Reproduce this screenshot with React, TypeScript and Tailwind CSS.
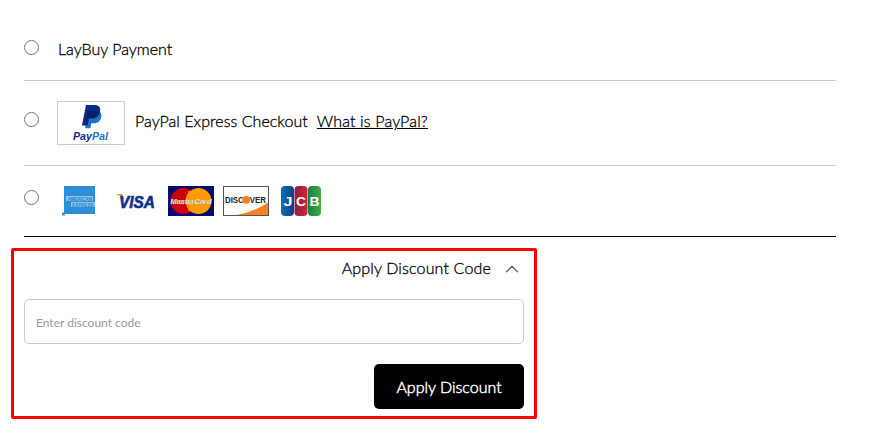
import { ChevronUp } from "lucide-react";

const PayPalLogo = () => (
  <svg width="66" height="42" viewBox="0 0 66 42">
    <path d="M29 9h9.500c3.700 0 5.500 2.200 4.800 5.800-.9 4.500-3.600 6.500-7.300 6.500h-2.700l-.9 5h-5.200z" fill="#1a73c9" />
    <path d="M28 3h8.500c4.200 0 6.300 2.200 5.600 6-.8 4.700-4 7.300-8.200 7.300h-3.200l-1.200 7.200h-5.600z" fill="#0a2d84" />
    <path d="M29.300 9h12.600c-.8 4.600-3.900 7.300-8 7.300h-3.200l-1.100 6.500-1.700.2z" fill="#0b1f66" />
    <text x="15" y="38" fontFamily="Liberation Sans, sans-serif" fontSize="11" fontWeight="700" fontStyle="italic" fill="#0a2d84" textLength="35" lengthAdjust="spacingAndGlyphs">
      Pay<tspan fill="#1a73c9">Pal</tspan>
    </text>
  </svg>
);

const AmexLogo = () => (
  <svg width="33" height="30" viewBox="0 0 33 30">
    <rect x="2" width="31" height="28" fill="#2a8fd8" />
    <rect x="0" y="26.500" width="3" height="3" fill="#3b97dc" />
    <rect x="4" y="10" width="27" height="5" fill="#8cc4ec" />
    <rect x="9" y="16" width="24" height="5" fill="#8cc4ec" />
    <text x="18" y="14.500" textAnchor="middle" fontFamily="Liberation Sans, sans-serif" fontSize="4.500" fontWeight="700" fill="#2a7fc8">AMERICAN</text>
    <text x="21" y="20.500" textAnchor="middle" fontFamily="Liberation Sans, sans-serif" fontSize="4.500" fontWeight="700" fill="#2a7fc8">EXPRESS</text>
  </svg>
);

const VisaLogo = () => (
  <svg width="41" height="16" viewBox="0 0 41 16">
    <path d="M0 1h7.500l2 6C7 4 4 2 0 1z" fill="#f0a63a" />
    <text x="4" y="14.500" fontFamily="Liberation Sans, sans-serif" fontSize="16" fontWeight="700" fontStyle="italic" fill="#14308a" stroke="#14308a" strokeWidth="0.600" textLength="36" lengthAdjust="spacingAndGlyphs">VISA</text>
  </svg>
);

const MasterCardLogo = () => (
  <svg width="46" height="30" viewBox="0 0 46 30">
    <rect width="46" height="30" fill="#000a70" />
    <circle cx="15.500" cy="15" r="13" fill="#cc0000" />
    <circle cx="30.500" cy="15" r="13" fill="#ff9a00" />
    <path d="M20 6h6M19 9h8M18.500 12h9M18.500 18h9M19 21h8M20 24h6" stroke="#ff9a00" strokeWidth="1.300" />
    <text x="2.500" y="18" fontFamily="Liberation Sans, sans-serif" fontSize="7.800" fontWeight="700" fontStyle="italic" fill="#fff" stroke="#999" strokeWidth="0.250" textLength="41" lengthAdjust="spacingAndGlyphs">MasterCard</text>
  </svg>
);

const DiscoverLogo = () => (
  <svg width="46" height="30" viewBox="0 0 46 30">
    <rect x="0.500" y="0.500" width="45" height="29" fill="#fff" stroke="#555" />
    <path d="M14 29C26 26.500 37 22 45 16.500V29z" fill="#f58220" />
    <text x="2" y="17" fontFamily="Liberation Sans, sans-serif" fontSize="8.400" fontWeight="700" fill="#222" textLength="41" lengthAdjust="spacingAndGlyphs">DISCOVER</text>
    <circle cx="23.300" cy="13.800" r="3.900" fill="#f58220" />
  </svg>
);

const JcbLogo = () => (
  <svg width="40" height="30" viewBox="0 0 40 30">
    <defs>
      <linearGradient id="jcb-blue" x1="0" x2="1">
        <stop offset="0" stopColor="#0f6fb5" />
        <stop offset="1" stopColor="#0b3f86" />
      </linearGradient>
      <linearGradient id="jcb-red" x1="0" x2="1">
        <stop offset="0" stopColor="#8f1d3c" />
        <stop offset="1" stopColor="#d3243a" />
      </linearGradient>
      <linearGradient id="jcb-green" x1="0" x2="1">
        <stop offset="0" stopColor="#15803f" />
        <stop offset="1" stopColor="#48ab47" />
      </linearGradient>
    </defs>
    <rect x="0" width="13" height="30" rx="4" fill="url(#jcb-blue)" />
    <rect x="13.500" width="13" height="30" rx="4" fill="url(#jcb-red)" />
    <rect x="27" width="13" height="30" rx="4" fill="url(#jcb-green)" />
    <text x="2.500" y="20" fontFamily="Liberation Sans, sans-serif" fontSize="13" fontWeight="700" fill="#fff" textLength="9" lengthAdjust="spacingAndGlyphs">J</text>
    <text x="15" y="20" fontFamily="Liberation Sans, sans-serif" fontSize="13" fontWeight="700" fill="#fff" textLength="10" lengthAdjust="spacingAndGlyphs">C</text>
    <text x="28.500" y="20" fontFamily="Liberation Sans, sans-serif" fontSize="13" fontWeight="700" fill="#fff" textLength="10" lengthAdjust="spacingAndGlyphs">B</text>
  </svg>
);

const App = () => {
  return (
    <div className="h-[426px] w-[871px] overflow-hidden bg-white text-black font-['Lato',sans-serif] text-base font-light [-webkit-text-stroke:0.3px_currentColor]">
      <div className="w-[836px] pl-6">
        <div className="flex h-[81px] border-b border-[#ccc] pt-10">
          <input type="radio" name="payment" className="m-0 h-[15px] w-[15px]" />
          <span className="ml-[19px] leading-[17px]">LayBuy Payment</span>
        </div>
        <div className="flex h-[85px] border-b border-[#ccc] pt-5">
          <input type="radio" name="payment" className="m-0 mt-[11px] h-[15px] w-[15px]" />
          <div className="ml-[18px] flex h-[44px] w-[68px] items-center justify-center border border-[#ccc] [-webkit-text-stroke:0]">
            <PayPalLogo />
          </div>
          <div className="ml-[10px] mt-[10px] flex leading-[20px]">
            <span className="tracking-[0.04px]">PayPal Express Checkout</span>
            <a className="ml-[9px] tracking-[0.15px] underline">What is PayPal?</a>
          </div>
        </div>
        <div className="flex h-[71px] items-start border-b border-black pt-5">
          <input type="radio" name="payment" className="m-0 mt-[4px] h-[15px] w-[15px]" />
          <div className="ml-[23px] flex h-[30px] items-center [-webkit-text-stroke:0]">
            <AmexLogo />
            <div className="ml-5"><VisaLogo /></div>
            <div className="ml-3"><MasterCardLogo /></div>
            <div className="ml-[9px]"><DiscoverLogo /></div>
            <div className="ml-3"><JcbLogo /></div>
          </div>
        </div>
        <div className="-ml-[13px] mt-[11px] h-[171px] w-[526px] rounded-[2px] border-[3px] border-[#f00] px-[10px]">
          <div className="flex h-[48px] items-center justify-end pb-[14px]">
            <span className="tracking-[0.16px]">Apply Discount Code</span>
            <ChevronUp className="ml-[10px] mr-[1px] mt-[2px] h-[22px] w-[22px] text-[#666]" strokeWidth={1.5} />
          </div>
          <input
            type="text"
            placeholder="Enter discount code"
            className="h-[45px] w-full rounded-[5px] border border-[#ccc] px-[11px] pt-[2px] text-xs font-normal placeholder:text-[#999] outline-none [-webkit-text-stroke:0]"
          />
          <div className="mt-5 flex justify-end">
            <button className="h-[45px] w-[150px] rounded-[5px] bg-black text-white [-webkit-text-stroke:0.45px_#fff]">Apply Discount</button>
          </div>
        </div>
      </div>
    </div>
  );
};

export default App;
